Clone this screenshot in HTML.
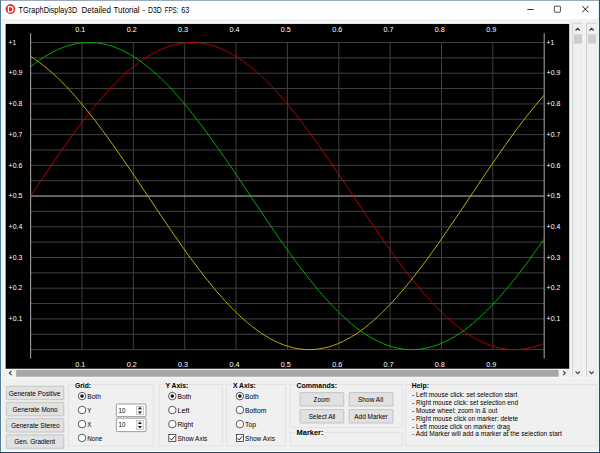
<!DOCTYPE html>
<html lang="en"><head><meta charset="utf-8"><title>TGraphDisplay3D Detailed Tutorial - D3D FPS: 63</title>
<style>
html,body{margin:0;padding:0;background:#f0f0f0;overflow:hidden}
body{width:600px;height:453px;position:relative;font-family:"Liberation Sans", sans-serif}
svg{position:absolute;left:0;top:0;display:block}
text{font-family:"Liberation Sans", sans-serif;white-space:pre}
.t{font-size:8.7px;fill:#000}
.ax{font-size:7.1px;fill:#fff}
.ui{font-size:7px;fill:#000}
.b{font-weight:bold;font-size:7px;fill:#000}
</style></head><body>
<svg width="600" height="453" viewBox="0 0 600 453">
<rect x="0" y="0" width="600" height="453" fill="#f0f0f0"/>
<rect x="0" y="0" width="600" height="19.2" fill="#ffffff"/>
<rect x="0" y="0" width="600" height="0.6" fill="#56718f"/>
<rect x="0" y="0" width="1" height="453" fill="#4f8098"/>
<rect x="1" y="19.2" width="0.4" height="453" fill="#ffffff"/>
<rect x="598" y="19.2" width="1" height="453" fill="#ffffff"/>
<rect x="598.9" y="0" width="1.1" height="453" fill="#2b4a78"/>
<rect x="0.9" y="450.8" width="598" height="1.2" fill="#ffffff"/>
<rect x="0" y="452" width="600" height="1" fill="#23426b"/>
<circle cx="10.45" cy="9.1" r="4.85" fill="#e8222a"/>
<path d="M8.4 6.6h2a2.6 2.6 0 0 1 0 5.2h-2z" fill="none" stroke="#fff" stroke-width="1.25"/>
<text class="t" y="12.5"><tspan x="18.6" textLength="58.7" lengthAdjust="spacingAndGlyphs">TGraphDisplay3D</tspan> <tspan x="81.6" textLength="29.3" lengthAdjust="spacingAndGlyphs">Detailed</tspan> <tspan x="113.6" textLength="26.0" lengthAdjust="spacingAndGlyphs">Tutorial</tspan> <tspan x="142.4" textLength="2.7" lengthAdjust="spacingAndGlyphs">-</tspan> <tspan x="148" textLength="13.8" lengthAdjust="spacingAndGlyphs">D3D</tspan> <tspan x="164.7" textLength="13.7" lengthAdjust="spacingAndGlyphs">FPS:</tspan> <tspan x="181.2" textLength="8.1" lengthAdjust="spacingAndGlyphs">63</tspan></text>
<path d="M527.3 9.5h6.5" stroke="#222" stroke-width="0.9" fill="none"/>
<rect x="554.4" y="6.2" width="6" height="6" rx="0.6" fill="none" stroke="#333" stroke-width="0.9"/>
<path d="M582.3 6.1l6.2 6.2M588.5 6.1l-6.2 6.2" stroke="#1a1a1a" stroke-width="1" fill="none"/>
<rect x="3.8" y="22.5" width="565.4000000000001" height="346.4" fill="#ffffff"/>
<rect x="5.6" y="23.9" width="563.6" height="345.0" fill="#000"/>
<rect x="30.6" y="349.10" width="513.6" height="1" fill="#404040"/>
<rect x="30.6" y="333.75" width="513.6" height="1" fill="#404040"/>
<rect x="30.6" y="318.39" width="513.6" height="1" fill="#404040"/>
<rect x="30.6" y="303.04" width="513.6" height="1" fill="#404040"/>
<rect x="30.6" y="287.68" width="513.6" height="1" fill="#404040"/>
<rect x="30.6" y="272.33" width="513.6" height="1" fill="#404040"/>
<rect x="30.6" y="256.97" width="513.6" height="1" fill="#404040"/>
<rect x="30.6" y="241.62" width="513.6" height="1" fill="#404040"/>
<rect x="30.6" y="226.26" width="513.6" height="1" fill="#404040"/>
<rect x="30.6" y="210.91" width="513.6" height="1" fill="#404040"/>
<rect x="30.6" y="180.19" width="513.6" height="1" fill="#404040"/>
<rect x="30.6" y="164.84" width="513.6" height="1" fill="#404040"/>
<rect x="30.6" y="149.49" width="513.6" height="1" fill="#404040"/>
<rect x="30.6" y="134.13" width="513.6" height="1" fill="#404040"/>
<rect x="30.6" y="118.78" width="513.6" height="1" fill="#404040"/>
<rect x="30.6" y="103.42" width="513.6" height="1" fill="#404040"/>
<rect x="30.6" y="88.06" width="513.6" height="1" fill="#404040"/>
<rect x="30.6" y="72.71" width="513.6" height="1" fill="#404040"/>
<rect x="30.6" y="57.36" width="513.6" height="1" fill="#404040"/>
<rect x="30.6" y="42.00" width="513.6" height="1" fill="#404040"/>
<rect x="81.46" y="42.5" width="1" height="307.1" fill="#404040"/>
<rect x="132.82" y="42.5" width="1" height="307.1" fill="#404040"/>
<rect x="184.18" y="42.5" width="1" height="307.1" fill="#404040"/>
<rect x="235.54" y="42.5" width="1" height="307.1" fill="#404040"/>
<rect x="286.90" y="42.5" width="1" height="307.1" fill="#404040"/>
<rect x="338.26" y="42.5" width="1" height="307.1" fill="#404040"/>
<rect x="389.62" y="42.5" width="1" height="307.1" fill="#404040"/>
<rect x="440.98" y="42.5" width="1" height="307.1" fill="#404040"/>
<rect x="492.34" y="42.5" width="1" height="307.1" fill="#404040"/>
<rect x="30.6" y="195.50" width="513.6" height="1.1" fill="#b0b0b0"/>
<rect x="30.05" y="33.2" width="1.1" height="325.3" fill="#9c9c9c"/>
<rect x="543.6500000000001" y="33.2" width="1.1" height="325.3" fill="#9c9c9c"/>
<polyline points="30.60,196.05 31.88,194.13 33.17,192.21 34.45,190.29 35.74,188.38 37.02,186.46 38.30,184.54 39.59,182.63 40.87,180.72 42.16,178.81 43.44,176.91 44.72,175.00 46.01,173.10 47.29,171.21 48.58,169.32 49.86,167.43 51.14,165.54 52.43,163.67 53.71,161.79 55.00,159.92 56.28,158.06 57.56,156.20 58.85,154.35 60.13,152.51 61.42,150.67 62.70,148.84 63.98,147.02 65.27,145.21 66.55,143.40 67.84,141.60 69.12,139.81 70.40,138.03 71.69,136.25 72.97,134.49 74.26,132.74 75.54,130.99 76.82,129.26 78.11,127.54 79.39,125.83 80.68,124.12 81.96,122.43 83.24,120.76 84.53,119.09 85.81,117.43 87.10,115.79 88.38,114.16 89.66,112.54 90.95,110.94 92.23,109.35 93.52,107.77 94.80,106.21 96.08,104.66 97.37,103.12 98.65,101.60 99.94,100.10 101.22,98.61 102.50,97.13 103.79,95.67 105.07,94.23 106.36,92.80 107.64,91.38 108.92,89.99 110.21,88.61 111.49,87.25 112.78,85.90 114.06,84.57 115.34,83.26 116.63,81.97 117.91,80.69 119.20,79.43 120.48,78.19 121.76,76.97 123.05,75.77 124.33,74.59 125.62,73.42 126.90,72.28 128.18,71.15 129.47,70.04 130.75,68.96 132.04,67.89 133.32,66.84 134.60,65.82 135.89,64.81 137.17,63.82 138.46,62.86 139.74,61.91 141.02,60.99 142.31,60.09 143.59,59.21 144.88,58.35 146.16,57.51 147.44,56.69 148.73,55.90 150.01,55.12 151.30,54.37 152.58,53.64 153.86,52.94 155.15,52.25 156.43,51.59 157.72,50.95 159.00,50.33 160.28,49.74 161.57,49.17 162.85,48.62 164.14,48.10 165.42,47.59 166.70,47.12 167.99,46.66 169.27,46.23 170.56,45.82 171.84,45.43 173.12,45.07 174.41,44.73 175.69,44.42 176.98,44.13 178.26,43.86 179.54,43.62 180.83,43.40 182.11,43.20 183.40,43.03 184.68,42.88 185.96,42.76 187.25,42.66 188.53,42.59 189.82,42.53 191.10,42.51 192.38,42.50 193.67,42.52 194.95,42.57 196.24,42.63 197.52,42.73 198.80,42.84 200.09,42.98 201.37,43.15 202.66,43.33 203.94,43.54 205.22,43.78 206.51,44.04 207.79,44.32 209.08,44.63 210.36,44.96 211.64,45.31 212.93,45.69 214.21,46.09 215.50,46.52 216.78,46.96 218.06,47.43 219.35,47.93 220.63,48.45 221.92,48.99 223.20,49.55 224.48,50.14 225.77,50.75 227.05,51.38 228.34,52.03 229.62,52.71 230.90,53.41 232.19,54.13 233.47,54.87 234.76,55.64 236.04,56.43 237.32,57.24 238.61,58.07 239.89,58.92 241.18,59.80 242.46,60.69 243.74,61.61 245.03,62.55 246.31,63.50 247.60,64.48 248.88,65.48 250.16,66.50 251.45,67.54 252.73,68.60 254.02,69.69 255.30,70.79 256.58,71.91 257.87,73.04 259.15,74.20 260.44,75.38 261.72,76.58 263.00,77.79 264.29,79.03 265.57,80.28 266.86,81.55 268.14,82.83 269.42,84.14 270.71,85.46 271.99,86.80 273.28,88.16 274.56,89.53 275.84,90.93 277.13,92.33 278.41,93.76 279.70,95.20 280.98,96.65 282.26,98.12 283.55,99.61 284.83,101.11 286.12,102.62 287.40,104.15 288.68,105.70 289.97,107.26 291.25,108.83 292.54,110.42 293.82,112.02 295.10,113.63 296.39,115.26 297.67,116.89 298.96,118.55 300.24,120.21 301.52,121.88 302.81,123.57 304.09,125.27 305.38,126.98 306.66,128.70 307.94,130.43 309.23,132.17 310.51,133.92 311.80,135.68 313.08,137.45 314.36,139.22 315.65,141.01 316.93,142.81 318.22,144.61 319.50,146.43 320.78,148.25 322.07,150.07 323.35,151.91 324.64,153.75 325.92,155.60 327.20,157.45 328.49,159.31 329.77,161.18 331.06,163.05 332.34,164.93 333.62,166.81 334.91,168.70 336.19,170.59 337.48,172.48 338.76,174.38 340.04,176.28 341.33,178.19 342.61,180.10 343.90,182.01 345.18,183.92 346.46,185.83 347.75,187.75 349.03,189.67 350.32,191.58 351.60,193.50 352.88,195.42 354.17,197.34 355.45,199.26 356.74,201.18 358.02,203.10 359.30,205.01 360.59,206.93 361.87,208.84 363.16,210.75 364.44,212.66 365.72,214.57 367.01,216.47 368.29,218.37 369.58,220.27 370.86,222.17 372.14,224.05 373.43,225.94 374.71,227.82 376.00,229.70 377.28,231.57 378.56,233.43 379.85,235.29 381.13,237.14 382.42,238.99 383.70,240.83 384.98,242.66 386.27,244.48 387.55,246.30 388.84,248.11 390.12,249.91 391.40,251.71 392.69,253.49 393.97,255.27 395.26,257.03 396.54,258.79 397.82,260.54 399.11,262.27 400.39,264.00 401.68,265.71 402.96,267.42 404.24,269.11 405.53,270.80 406.81,272.47 408.10,274.13 409.38,275.77 410.66,277.41 411.95,279.03 413.23,280.64 414.52,282.23 415.80,283.81 417.08,285.38 418.37,286.94 419.65,288.48 420.94,290.00 422.22,291.51 423.50,293.01 424.79,294.49 426.07,295.95 427.36,297.40 428.64,298.84 429.92,300.25 431.21,301.66 432.49,303.04 433.78,304.41 435.06,305.76 436.34,307.10 437.63,308.41 438.91,309.71 440.20,310.99 441.48,312.26 442.76,313.50 444.05,314.73 445.33,315.94 446.62,317.13 447.90,318.30 449.18,319.45 450.47,320.58 451.75,321.70 453.04,322.79 454.32,323.86 455.60,324.92 456.89,325.95 458.17,326.96 459.46,327.96 460.74,328.93 462.02,329.88 463.31,330.81 464.59,331.72 465.88,332.61 467.16,333.48 468.44,334.32 469.73,335.14 471.01,335.95 472.30,336.73 473.58,337.49 474.86,338.22 476.15,338.94 477.43,339.63 478.72,340.30 480.00,340.94 481.28,341.57 482.57,342.17 483.85,342.75 485.14,343.30 486.42,343.84 487.70,344.34 488.99,344.83 490.27,345.29 491.56,345.73 492.84,346.15 494.12,346.54 495.41,346.91 496.69,347.26 497.98,347.58 499.26,347.88 500.54,348.15 501.83,348.40 503.11,348.63 504.40,348.83 505.68,349.01 506.96,349.17 508.25,349.30 509.53,349.41 510.82,349.49 512.10,349.55 513.38,349.59 514.67,349.60 515.95,349.59 517.24,349.55 518.52,349.49 519.80,349.41 521.09,349.30 522.37,349.17 523.66,349.01 524.94,348.83 526.22,348.63 527.51,348.40 528.79,348.15 530.08,347.87 531.36,347.57 532.64,347.25 533.93,346.91 535.21,346.54 536.50,346.14 537.78,345.73 539.06,345.29 540.35,344.82 541.63,344.34 542.92,343.83 544.20,343.29" fill="none" stroke="#c40000" stroke-width="1"/>
<polyline points="30.60,66.84 31.88,65.82 33.17,64.81 34.45,63.82 35.74,62.86 37.02,61.91 38.30,60.99 39.59,60.09 40.87,59.21 42.16,58.35 43.44,57.51 44.72,56.69 46.01,55.90 47.29,55.12 48.58,54.37 49.86,53.64 51.14,52.94 52.43,52.25 53.71,51.59 55.00,50.95 56.28,50.33 57.56,49.74 58.85,49.17 60.13,48.62 61.42,48.10 62.70,47.59 63.98,47.12 65.27,46.66 66.55,46.23 67.84,45.82 69.12,45.43 70.40,45.07 71.69,44.73 72.97,44.42 74.26,44.13 75.54,43.86 76.82,43.62 78.11,43.40 79.39,43.20 80.68,43.03 81.96,42.88 83.24,42.76 84.53,42.66 85.81,42.59 87.10,42.53 88.38,42.51 89.66,42.50 90.95,42.52 92.23,42.57 93.52,42.63 94.80,42.73 96.08,42.84 97.37,42.98 98.65,43.15 99.94,43.33 101.22,43.54 102.50,43.78 103.79,44.04 105.07,44.32 106.36,44.63 107.64,44.96 108.92,45.31 110.21,45.69 111.49,46.09 112.78,46.52 114.06,46.96 115.34,47.43 116.63,47.93 117.91,48.45 119.20,48.99 120.48,49.55 121.76,50.14 123.05,50.75 124.33,51.38 125.62,52.03 126.90,52.71 128.18,53.41 129.47,54.13 130.75,54.87 132.04,55.64 133.32,56.43 134.60,57.24 135.89,58.07 137.17,58.92 138.46,59.80 139.74,60.69 141.02,61.61 142.31,62.55 143.59,63.50 144.88,64.48 146.16,65.48 147.44,66.50 148.73,67.54 150.01,68.60 151.30,69.69 152.58,70.79 153.86,71.91 155.15,73.04 156.43,74.20 157.72,75.38 159.00,76.58 160.28,77.79 161.57,79.03 162.85,80.28 164.14,81.55 165.42,82.83 166.70,84.14 167.99,85.46 169.27,86.80 170.56,88.16 171.84,89.53 173.12,90.93 174.41,92.33 175.69,93.76 176.98,95.20 178.26,96.65 179.54,98.12 180.83,99.61 182.11,101.11 183.40,102.62 184.68,104.15 185.96,105.70 187.25,107.26 188.53,108.83 189.82,110.42 191.10,112.02 192.38,113.63 193.67,115.26 194.95,116.89 196.24,118.55 197.52,120.21 198.80,121.88 200.09,123.57 201.37,125.27 202.66,126.98 203.94,128.70 205.22,130.43 206.51,132.17 207.79,133.92 209.08,135.68 210.36,137.45 211.64,139.22 212.93,141.01 214.21,142.81 215.50,144.61 216.78,146.43 218.06,148.25 219.35,150.07 220.63,151.91 221.92,153.75 223.20,155.60 224.48,157.45 225.77,159.31 227.05,161.18 228.34,163.05 229.62,164.93 230.90,166.81 232.19,168.70 233.47,170.59 234.76,172.48 236.04,174.38 237.32,176.28 238.61,178.19 239.89,180.10 241.18,182.01 242.46,183.92 243.74,185.83 245.03,187.75 246.31,189.67 247.60,191.58 248.88,193.50 250.16,195.42 251.45,197.34 252.73,199.26 254.02,201.18 255.30,203.10 256.58,205.01 257.87,206.93 259.15,208.84 260.44,210.75 261.72,212.66 263.00,214.57 264.29,216.47 265.57,218.37 266.86,220.27 268.14,222.17 269.42,224.05 270.71,225.94 271.99,227.82 273.28,229.70 274.56,231.57 275.84,233.43 277.13,235.29 278.41,237.14 279.70,238.99 280.98,240.83 282.26,242.66 283.55,244.48 284.83,246.30 286.12,248.11 287.40,249.91 288.68,251.71 289.97,253.49 291.25,255.27 292.54,257.03 293.82,258.79 295.10,260.54 296.39,262.27 297.67,264.00 298.96,265.71 300.24,267.42 301.52,269.11 302.81,270.80 304.09,272.47 305.38,274.13 306.66,275.77 307.94,277.41 309.23,279.03 310.51,280.64 311.80,282.23 313.08,283.81 314.36,285.38 315.65,286.94 316.93,288.48 318.22,290.00 319.50,291.51 320.78,293.01 322.07,294.49 323.35,295.95 324.64,297.40 325.92,298.84 327.20,300.25 328.49,301.66 329.77,303.04 331.06,304.41 332.34,305.76 333.62,307.10 334.91,308.41 336.19,309.71 337.48,310.99 338.76,312.26 340.04,313.50 341.33,314.73 342.61,315.94 343.90,317.13 345.18,318.30 346.46,319.45 347.75,320.58 349.03,321.70 350.32,322.79 351.60,323.86 352.88,324.92 354.17,325.95 355.45,326.96 356.74,327.96 358.02,328.93 359.30,329.88 360.59,330.81 361.87,331.72 363.16,332.61 364.44,333.48 365.72,334.32 367.01,335.14 368.29,335.95 369.58,336.73 370.86,337.49 372.14,338.22 373.43,338.94 374.71,339.63 376.00,340.30 377.28,340.94 378.56,341.57 379.85,342.17 381.13,342.75 382.42,343.30 383.70,343.84 384.98,344.34 386.27,344.83 387.55,345.29 388.84,345.73 390.12,346.15 391.40,346.54 392.69,346.91 393.97,347.26 395.26,347.58 396.54,347.88 397.82,348.15 399.11,348.40 400.39,348.63 401.68,348.83 402.96,349.01 404.24,349.17 405.53,349.30 406.81,349.41 408.10,349.49 409.38,349.55 410.66,349.59 411.95,349.60 413.23,349.59 414.52,349.55 415.80,349.49 417.08,349.41 418.37,349.30 419.65,349.17 420.94,349.01 422.22,348.83 423.50,348.63 424.79,348.40 426.07,348.15 427.36,347.87 428.64,347.57 429.92,347.25 431.21,346.91 432.49,346.54 433.78,346.14 435.06,345.73 436.34,345.29 437.63,344.82 438.91,344.34 440.20,343.83 441.48,343.29 442.76,342.74 444.05,342.16 445.33,341.56 446.62,340.93 447.90,340.28 449.18,339.62 450.47,338.92 451.75,338.21 453.04,337.47 454.32,336.71 455.60,335.93 456.89,335.13 458.17,334.31 459.46,333.46 460.74,332.59 462.02,331.70 463.31,330.79 464.59,329.86 465.88,328.91 467.16,327.94 468.44,326.95 469.73,325.93 471.01,324.90 472.30,323.84 473.58,322.77 474.86,321.68 476.15,320.56 477.43,319.43 478.72,318.28 480.00,317.11 481.28,315.92 482.57,314.71 483.85,313.48 485.14,312.23 486.42,310.97 487.70,309.69 488.99,308.39 490.27,307.07 491.56,305.74 492.84,304.39 494.12,303.02 495.41,301.63 496.69,300.23 497.98,298.81 499.26,297.38 500.54,295.93 501.83,294.46 503.11,292.98 504.40,291.48 505.68,289.97 506.96,288.45 508.25,286.91 509.53,285.35 510.82,283.79 512.10,282.20 513.38,280.61 514.67,279.00 515.95,277.38 517.24,275.74 518.52,274.10 519.80,272.44 521.09,270.77 522.37,269.08 523.66,267.39 524.94,265.68 526.22,263.97 527.51,262.24 528.79,260.50 530.08,258.76 531.36,257.00 532.64,255.23 533.93,253.46 535.21,251.67 536.50,249.88 537.78,248.08 539.06,246.27 540.35,244.45 541.63,242.63 542.92,240.79 544.20,238.95" fill="none" stroke="#00b800" stroke-width="1"/>
<polyline points="30.60,56.43 31.88,57.24 33.17,58.07 34.45,58.92 35.74,59.80 37.02,60.69 38.30,61.61 39.59,62.55 40.87,63.50 42.16,64.48 43.44,65.48 44.72,66.50 46.01,67.54 47.29,68.60 48.58,69.69 49.86,70.79 51.14,71.91 52.43,73.04 53.71,74.20 55.00,75.38 56.28,76.58 57.56,77.79 58.85,79.03 60.13,80.28 61.42,81.55 62.70,82.83 63.98,84.14 65.27,85.46 66.55,86.80 67.84,88.16 69.12,89.53 70.40,90.93 71.69,92.33 72.97,93.76 74.26,95.20 75.54,96.65 76.82,98.12 78.11,99.61 79.39,101.11 80.68,102.62 81.96,104.15 83.24,105.70 84.53,107.26 85.81,108.83 87.10,110.42 88.38,112.02 89.66,113.63 90.95,115.26 92.23,116.89 93.52,118.55 94.80,120.21 96.08,121.88 97.37,123.57 98.65,125.27 99.94,126.98 101.22,128.70 102.50,130.43 103.79,132.17 105.07,133.92 106.36,135.68 107.64,137.45 108.92,139.22 110.21,141.01 111.49,142.81 112.78,144.61 114.06,146.43 115.34,148.25 116.63,150.07 117.91,151.91 119.20,153.75 120.48,155.60 121.76,157.45 123.05,159.31 124.33,161.18 125.62,163.05 126.90,164.93 128.18,166.81 129.47,168.70 130.75,170.59 132.04,172.48 133.32,174.38 134.60,176.28 135.89,178.19 137.17,180.10 138.46,182.01 139.74,183.92 141.02,185.83 142.31,187.75 143.59,189.67 144.88,191.58 146.16,193.50 147.44,195.42 148.73,197.34 150.01,199.26 151.30,201.18 152.58,203.10 153.86,205.01 155.15,206.93 156.43,208.84 157.72,210.75 159.00,212.66 160.28,214.57 161.57,216.47 162.85,218.37 164.14,220.27 165.42,222.17 166.70,224.05 167.99,225.94 169.27,227.82 170.56,229.70 171.84,231.57 173.12,233.43 174.41,235.29 175.69,237.14 176.98,238.99 178.26,240.83 179.54,242.66 180.83,244.48 182.11,246.30 183.40,248.11 184.68,249.91 185.96,251.71 187.25,253.49 188.53,255.27 189.82,257.03 191.10,258.79 192.38,260.54 193.67,262.27 194.95,264.00 196.24,265.71 197.52,267.42 198.80,269.11 200.09,270.80 201.37,272.47 202.66,274.13 203.94,275.77 205.22,277.41 206.51,279.03 207.79,280.64 209.08,282.23 210.36,283.81 211.64,285.38 212.93,286.94 214.21,288.48 215.50,290.00 216.78,291.51 218.06,293.01 219.35,294.49 220.63,295.95 221.92,297.40 223.20,298.84 224.48,300.25 225.77,301.66 227.05,303.04 228.34,304.41 229.62,305.76 230.90,307.10 232.19,308.41 233.47,309.71 234.76,310.99 236.04,312.26 237.32,313.50 238.61,314.73 239.89,315.94 241.18,317.13 242.46,318.30 243.74,319.45 245.03,320.58 246.31,321.70 247.60,322.79 248.88,323.86 250.16,324.92 251.45,325.95 252.73,326.96 254.02,327.96 255.30,328.93 256.58,329.88 257.87,330.81 259.15,331.72 260.44,332.61 261.72,333.48 263.00,334.32 264.29,335.14 265.57,335.95 266.86,336.73 268.14,337.49 269.42,338.22 270.71,338.94 271.99,339.63 273.28,340.30 274.56,340.94 275.84,341.57 277.13,342.17 278.41,342.75 279.70,343.30 280.98,343.84 282.26,344.34 283.55,344.83 284.83,345.29 286.12,345.73 287.40,346.15 288.68,346.54 289.97,346.91 291.25,347.26 292.54,347.58 293.82,347.88 295.10,348.15 296.39,348.40 297.67,348.63 298.96,348.83 300.24,349.01 301.52,349.17 302.81,349.30 304.09,349.41 305.38,349.49 306.66,349.55 307.94,349.59 309.23,349.60 310.51,349.59 311.80,349.55 313.08,349.49 314.36,349.41 315.65,349.30 316.93,349.17 318.22,349.01 319.50,348.83 320.78,348.63 322.07,348.40 323.35,348.15 324.64,347.87 325.92,347.57 327.20,347.25 328.49,346.91 329.77,346.54 331.06,346.14 332.34,345.73 333.62,345.29 334.91,344.82 336.19,344.34 337.48,343.83 338.76,343.29 340.04,342.74 341.33,342.16 342.61,341.56 343.90,340.93 345.18,340.28 346.46,339.62 347.75,338.92 349.03,338.21 350.32,337.47 351.60,336.71 352.88,335.93 354.17,335.13 355.45,334.31 356.74,333.46 358.02,332.59 359.30,331.70 360.59,330.79 361.87,329.86 363.16,328.91 364.44,327.94 365.72,326.95 367.01,325.93 368.29,324.90 369.58,323.84 370.86,322.77 372.14,321.68 373.43,320.56 374.71,319.43 376.00,318.28 377.28,317.11 378.56,315.92 379.85,314.71 381.13,313.48 382.42,312.23 383.70,310.97 384.98,309.69 386.27,308.39 387.55,307.07 388.84,305.74 390.12,304.39 391.40,303.02 392.69,301.63 393.97,300.23 395.26,298.81 396.54,297.38 397.82,295.93 399.11,294.46 400.39,292.98 401.68,291.48 402.96,289.97 404.24,288.45 405.53,286.91 406.81,285.35 408.10,283.79 409.38,282.20 410.66,280.61 411.95,279.00 413.23,277.38 414.52,275.74 415.80,274.10 417.08,272.44 418.37,270.77 419.65,269.08 420.94,267.39 422.22,265.68 423.50,263.97 424.79,262.24 426.07,260.50 427.36,258.76 428.64,257.00 429.92,255.23 431.21,253.46 432.49,251.67 433.78,249.88 435.06,248.08 436.34,246.27 437.63,244.45 438.91,242.63 440.20,240.79 441.48,238.95 442.76,237.11 444.05,235.26 445.33,233.40 446.62,231.53 447.90,229.66 449.18,227.79 450.47,225.91 451.75,224.02 453.04,222.13 454.32,220.24 455.60,218.34 456.89,216.44 458.17,214.54 459.46,212.63 460.74,210.72 462.02,208.81 463.31,206.89 464.59,204.98 465.88,203.06 467.16,201.14 468.44,199.23 469.73,197.31 471.01,195.39 472.30,193.47 473.58,191.55 474.86,189.63 476.15,187.71 477.43,185.80 478.72,183.88 480.00,181.97 481.28,180.06 482.57,178.15 483.85,176.25 485.14,174.35 486.42,172.45 487.70,170.55 488.99,168.66 490.27,166.78 491.56,164.90 492.84,163.02 494.12,161.15 495.41,159.28 496.69,157.42 497.98,155.56 499.26,153.72 500.54,151.88 501.83,150.04 503.11,148.21 504.40,146.39 505.68,144.58 506.96,142.78 508.25,140.98 509.53,139.19 510.82,137.41 512.10,135.65 513.38,133.89 514.67,132.14 515.95,130.39 517.24,128.67 518.52,126.95 519.80,125.24 521.09,123.54 522.37,121.85 523.66,120.18 524.94,118.52 526.22,116.87 527.51,115.23 528.79,113.60 530.08,111.99 531.36,110.39 532.64,108.80 533.93,107.23 535.21,105.67 536.50,104.13 537.78,102.60 539.06,101.08 540.35,99.58 541.63,98.09 542.92,96.62 544.20,95.17" fill="none" stroke="#c4b800" stroke-width="1"/>
<text class="ax" x="75.36" y="31.6" textLength="10" lengthAdjust="spacingAndGlyphs">0.1</text>
<text class="ax" x="75.36" y="366.6" textLength="10" lengthAdjust="spacingAndGlyphs">0.1</text>
<text class="ax" x="126.72" y="31.6" textLength="10" lengthAdjust="spacingAndGlyphs">0.2</text>
<text class="ax" x="126.72" y="366.6" textLength="10" lengthAdjust="spacingAndGlyphs">0.2</text>
<text class="ax" x="178.08" y="31.6" textLength="10" lengthAdjust="spacingAndGlyphs">0.3</text>
<text class="ax" x="178.08" y="366.6" textLength="10" lengthAdjust="spacingAndGlyphs">0.3</text>
<text class="ax" x="229.44" y="31.6" textLength="10" lengthAdjust="spacingAndGlyphs">0.4</text>
<text class="ax" x="229.44" y="366.6" textLength="10" lengthAdjust="spacingAndGlyphs">0.4</text>
<text class="ax" x="280.80" y="31.6" textLength="10" lengthAdjust="spacingAndGlyphs">0.5</text>
<text class="ax" x="280.80" y="366.6" textLength="10" lengthAdjust="spacingAndGlyphs">0.5</text>
<text class="ax" x="332.16" y="31.6" textLength="10" lengthAdjust="spacingAndGlyphs">0.6</text>
<text class="ax" x="332.16" y="366.6" textLength="10" lengthAdjust="spacingAndGlyphs">0.6</text>
<text class="ax" x="383.52" y="31.6" textLength="10" lengthAdjust="spacingAndGlyphs">0.7</text>
<text class="ax" x="383.52" y="366.6" textLength="10" lengthAdjust="spacingAndGlyphs">0.7</text>
<text class="ax" x="434.88" y="31.6" textLength="10" lengthAdjust="spacingAndGlyphs">0.8</text>
<text class="ax" x="434.88" y="366.6" textLength="10" lengthAdjust="spacingAndGlyphs">0.8</text>
<text class="ax" x="486.24" y="31.6" textLength="10" lengthAdjust="spacingAndGlyphs">0.9</text>
<text class="ax" x="486.24" y="366.6" textLength="10" lengthAdjust="spacingAndGlyphs">0.9</text>
<text class="ax" x="8.6" y="321.09" textLength="13.7" lengthAdjust="spacingAndGlyphs">+0.1</text>
<text class="ax" x="546.6" y="321.09" textLength="13.7" lengthAdjust="spacingAndGlyphs">+0.1</text>
<text class="ax" x="8.6" y="290.38" textLength="13.7" lengthAdjust="spacingAndGlyphs">+0.2</text>
<text class="ax" x="546.6" y="290.38" textLength="13.7" lengthAdjust="spacingAndGlyphs">+0.2</text>
<text class="ax" x="8.6" y="259.67" textLength="13.7" lengthAdjust="spacingAndGlyphs">+0.3</text>
<text class="ax" x="546.6" y="259.67" textLength="13.7" lengthAdjust="spacingAndGlyphs">+0.3</text>
<text class="ax" x="8.6" y="228.96" textLength="13.7" lengthAdjust="spacingAndGlyphs">+0.4</text>
<text class="ax" x="546.6" y="228.96" textLength="13.7" lengthAdjust="spacingAndGlyphs">+0.4</text>
<text class="ax" x="8.6" y="198.25" textLength="13.7" lengthAdjust="spacingAndGlyphs">+0.5</text>
<text class="ax" x="546.6" y="198.25" textLength="13.7" lengthAdjust="spacingAndGlyphs">+0.5</text>
<text class="ax" x="8.6" y="167.54" textLength="13.7" lengthAdjust="spacingAndGlyphs">+0.6</text>
<text class="ax" x="546.6" y="167.54" textLength="13.7" lengthAdjust="spacingAndGlyphs">+0.6</text>
<text class="ax" x="8.6" y="136.83" textLength="13.7" lengthAdjust="spacingAndGlyphs">+0.7</text>
<text class="ax" x="546.6" y="136.83" textLength="13.7" lengthAdjust="spacingAndGlyphs">+0.7</text>
<text class="ax" x="8.6" y="106.12" textLength="13.7" lengthAdjust="spacingAndGlyphs">+0.8</text>
<text class="ax" x="546.6" y="106.12" textLength="13.7" lengthAdjust="spacingAndGlyphs">+0.8</text>
<text class="ax" x="8.6" y="75.41" textLength="13.7" lengthAdjust="spacingAndGlyphs">+0.9</text>
<text class="ax" x="546.6" y="75.41" textLength="13.7" lengthAdjust="spacingAndGlyphs">+0.9</text>
<text class="ax" x="8.6" y="44.70" textLength="7.5" lengthAdjust="spacingAndGlyphs">+1</text>
<text class="ax" x="546.6" y="44.70" textLength="7.5" lengthAdjust="spacingAndGlyphs">+1</text>
<rect x="5.5" y="368.9" width="563.7" height="9" fill="#f0f0f0"/>
<rect x="5.5" y="368.9" width="563.7" height="0.7" fill="#ffffff"/>
<rect x="16.2" y="369.8" width="542.4" height="6.9" fill="#a6a6a6"/>
<path d="M11.6 370.9l-2.3 2.1l2.3 2.1" stroke="#444" stroke-width="1.1" fill="none"/>
<path d="M563.1 370.9l2.3 2.1l-2.3 2.1" stroke="#444" stroke-width="1.1" fill="none"/>
<rect x="571.6" y="22.6" width="12" height="354.8" fill="#fafafa"/>
<rect x="572.1999999999999" y="22.8" width="10.6" height="354.3" fill="#cccccc"/>
<rect x="573.1" y="23.6" width="9.7" height="353.5" fill="#f0f0f0"/>
<rect x="573.9" y="34.3" width="8.1" height="9.3" fill="#cdcdcd"/>
<path d="M575.55 30.5l2.15 -2.2l2.15 2.2" stroke="#3c3c3c" stroke-width="1.15" fill="none"/>
<path d="M575.55 371.4l2.15 2.2l2.15 -2.2" stroke="#3c3c3c" stroke-width="1.15" fill="none"/>
<rect x="585.5" y="22.6" width="12" height="354.8" fill="#fafafa"/>
<rect x="586.0999999999999" y="22.8" width="10.6" height="354.3" fill="#cccccc"/>
<rect x="587.0" y="23.6" width="9.7" height="353.5" fill="#f0f0f0"/>
<rect x="587.8" y="34.3" width="8.1" height="9.3" fill="#cdcdcd"/>
<path d="M589.4499999999999 30.5l2.15 -2.2l2.15 2.2" stroke="#3c3c3c" stroke-width="1.15" fill="none"/>
<path d="M589.4499999999999 371.4l2.15 2.2l2.15 -2.2" stroke="#3c3c3c" stroke-width="1.15" fill="none"/>
<rect x="1.5" y="377.4" width="596.5" height="0.9" fill="#fafafa"/>
<rect x="6.4" y="386.2" width="57.4" height="13.5" rx="0.5" fill="#e1e1e1" stroke="#b2b2b2" stroke-width="0.65"/>
<text class="ui" x="8.70" y="395.85" textLength="51.80" lengthAdjust="spacingAndGlyphs">Generate Positive</text>
<rect x="6.4" y="402.4" width="57.4" height="13.5" rx="0.5" fill="#e1e1e1" stroke="#b2b2b2" stroke-width="0.65"/>
<text class="ui" x="12.50" y="412.05" textLength="45.20" lengthAdjust="spacingAndGlyphs">Generate Mono</text>
<rect x="6.4" y="418.59999999999997" width="57.4" height="13.5" rx="0.5" fill="#e1e1e1" stroke="#b2b2b2" stroke-width="0.65"/>
<text class="ui" x="10.90" y="428.25" textLength="48.80" lengthAdjust="spacingAndGlyphs">Generate Stereo</text>
<rect x="6.4" y="434.79999999999995" width="57.4" height="13.5" rx="0.5" fill="#e1e1e1" stroke="#b2b2b2" stroke-width="0.65"/>
<text class="ui" x="14.20" y="444.45" textLength="41.00" lengthAdjust="spacingAndGlyphs">Gen. Gradient</text>
<rect x="68.6" y="384.6" width="84.60" height="61.30" fill="none" stroke="#dcdcdc" stroke-width="0.7"/>
<rect x="73.6" y="382.6" width="18.7" height="4" fill="#f0f0f0"/>
<text class="b" x="74.90" y="387.90" textLength="16.20" lengthAdjust="spacingAndGlyphs">Grid:</text>
<circle cx="82" cy="396.1" r="3.75" fill="#fff" stroke="#333" stroke-width="0.8"/>
<circle cx="82" cy="396.1" r="1.8" fill="#1a1a1a"/>
<text class="ui" x="87.20" y="398.70" textLength="13.70" lengthAdjust="spacingAndGlyphs">Both</text>
<circle cx="82" cy="410.0" r="3.75" fill="#fff" stroke="#333" stroke-width="0.8"/>
<text class="ui" x="87.20" y="412.60" textLength="4.10" lengthAdjust="spacingAndGlyphs">Y</text>
<circle cx="82" cy="424.1" r="3.75" fill="#fff" stroke="#333" stroke-width="0.8"/>
<text class="ui" x="87.20" y="426.70" textLength="4.10" lengthAdjust="spacingAndGlyphs">X</text>
<circle cx="82" cy="437.9" r="3.75" fill="#fff" stroke="#333" stroke-width="0.8"/>
<text class="ui" x="87.20" y="440.50" textLength="15.10" lengthAdjust="spacingAndGlyphs">None</text>
<rect x="116.3" y="404" width="29.7" height="12.6" rx="0.8" fill="#fff" stroke="#8c8c8c" stroke-width="0.85"/>
<text class="ui" x="118.50" y="412.60" textLength="6.90" lengthAdjust="spacingAndGlyphs">10</text>
<rect x="136.3" y="406.3" width="7.2" height="8.3" fill="#f4f4f4" stroke="#b0b0b0" stroke-width="0.6"/>
<path d="M137.9 409.3l2 -2.5l2 2.5z" fill="#1a1a1a"/>
<path d="M137.9 411.50000000000006l2 2.5l2 -2.5z" fill="#1a1a1a"/>
<rect x="116.3" y="418.2" width="29.7" height="13.4" rx="0.8" fill="#fff" stroke="#8c8c8c" stroke-width="0.85"/>
<text class="ui" x="118.50" y="427.20" textLength="6.90" lengthAdjust="spacingAndGlyphs">10</text>
<rect x="136.3" y="420.5" width="7.2" height="9.100000000000001" fill="#f4f4f4" stroke="#b0b0b0" stroke-width="0.6"/>
<path d="M137.9 423.9l2 -2.5l2 2.5z" fill="#1a1a1a"/>
<path d="M137.9 426.1l2 2.5l2 -2.5z" fill="#1a1a1a"/>
<rect x="159.1" y="384.6" width="63.40" height="61.30" fill="none" stroke="#dcdcdc" stroke-width="0.7"/>
<rect x="164.1" y="382.6" width="25.4" height="4" fill="#f0f0f0"/>
<text class="b" x="165.40" y="387.90" textLength="22.90" lengthAdjust="spacingAndGlyphs">Y Axis:</text>
<circle cx="172.3" cy="396.1" r="3.75" fill="#fff" stroke="#333" stroke-width="0.8"/>
<circle cx="172.3" cy="396.1" r="1.8" fill="#1a1a1a"/>
<text class="ui" x="177.50" y="398.70" textLength="13.70" lengthAdjust="spacingAndGlyphs">Both</text>
<circle cx="172.3" cy="410.0" r="3.75" fill="#fff" stroke="#333" stroke-width="0.8"/>
<text class="ui" x="177.50" y="412.60" textLength="11.90" lengthAdjust="spacingAndGlyphs">Left</text>
<circle cx="172.3" cy="424.1" r="3.75" fill="#fff" stroke="#333" stroke-width="0.8"/>
<text class="ui" x="177.50" y="426.70" textLength="15.70" lengthAdjust="spacingAndGlyphs">Right</text>
<rect x="168.8" y="434.5" width="7" height="7" fill="#fff" stroke="#333" stroke-width="0.8"/>
<path d="M169.9 438.2l1.7 1.9l3.1 -4" stroke="#222" stroke-width="0.9" fill="none"/>
<text class="ui" x="177.50" y="440.60" textLength="29.80" lengthAdjust="spacingAndGlyphs">Show Axis</text>
<rect x="226.6" y="384.6" width="59.10" height="61.30" fill="none" stroke="#dcdcdc" stroke-width="0.7"/>
<rect x="231.6" y="382.6" width="25.4" height="4" fill="#f0f0f0"/>
<text class="b" x="232.90" y="387.90" textLength="22.90" lengthAdjust="spacingAndGlyphs">X Axis:</text>
<circle cx="239.9" cy="396.1" r="3.75" fill="#fff" stroke="#333" stroke-width="0.8"/>
<circle cx="239.9" cy="396.1" r="1.8" fill="#1a1a1a"/>
<text class="ui" x="245.10" y="398.70" textLength="13.70" lengthAdjust="spacingAndGlyphs">Both</text>
<circle cx="239.9" cy="410.0" r="3.75" fill="#fff" stroke="#333" stroke-width="0.8"/>
<text class="ui" x="245.10" y="412.60" textLength="21.10" lengthAdjust="spacingAndGlyphs">Bottom</text>
<circle cx="239.9" cy="424.1" r="3.75" fill="#fff" stroke="#333" stroke-width="0.8"/>
<text class="ui" x="245.10" y="426.70" textLength="11.00" lengthAdjust="spacingAndGlyphs">Top</text>
<rect x="236.4" y="434.5" width="7" height="7" fill="#fff" stroke="#333" stroke-width="0.8"/>
<path d="M237.5 438.2l1.7 1.9l3.1 -4" stroke="#222" stroke-width="0.9" fill="none"/>
<text class="ui" x="245.10" y="440.60" textLength="29.80" lengthAdjust="spacingAndGlyphs">Show Axis</text>
<rect x="290.2" y="384.6" width="111.90" height="42.70" fill="none" stroke="#dcdcdc" stroke-width="0.7"/>
<rect x="295.2" y="382.6" width="43" height="4" fill="#f0f0f0"/>
<text class="b" x="296.50" y="387.90" textLength="40.50" lengthAdjust="spacingAndGlyphs">Commands:</text>
<rect x="300" y="392.6" width="43.8" height="13.4" rx="0.5" fill="#e1e1e1" stroke="#b2b2b2" stroke-width="0.65"/>
<text class="ui" x="313.60" y="402.20" textLength="16.20" lengthAdjust="spacingAndGlyphs">Zoom</text>
<rect x="300" y="409.6" width="43.8" height="13.4" rx="0.5" fill="#e1e1e1" stroke="#b2b2b2" stroke-width="0.65"/>
<text class="ui" x="308.80" y="419.20" textLength="26.50" lengthAdjust="spacingAndGlyphs">Select All</text>
<rect x="349.2" y="392.6" width="43.8" height="13.4" rx="0.5" fill="#e1e1e1" stroke="#b2b2b2" stroke-width="0.65"/>
<text class="ui" x="358.00" y="402.20" textLength="25.10" lengthAdjust="spacingAndGlyphs">Show All</text>
<rect x="349.2" y="409.6" width="43.8" height="13.4" rx="0.5" fill="#e1e1e1" stroke="#b2b2b2" stroke-width="0.65"/>
<text class="ui" x="354.20" y="419.20" textLength="33.60" lengthAdjust="spacingAndGlyphs">Add Marker</text>
<rect x="290.2" y="432.4" width="111.90" height="13.50" fill="none" stroke="#dcdcdc" stroke-width="0.7"/>
<rect x="295.2" y="430.4" width="29.5" height="4" fill="#f0f0f0"/>
<text class="b" x="296.50" y="435.00" textLength="27.00" lengthAdjust="spacingAndGlyphs">Marker:</text>
<rect x="405.5" y="384.6" width="190.70" height="61.30" fill="none" stroke="#dcdcdc" stroke-width="0.7"/>
<rect x="410.5" y="382.6" width="19.7" height="4" fill="#f0f0f0"/>
<text class="b" x="411.80" y="387.90" textLength="17.20" lengthAdjust="spacingAndGlyphs">Help:</text>
<text class="ui" x="412.10" y="397.30" textLength="105.10" lengthAdjust="spacingAndGlyphs">- Left mouse click: set selection start</text>
<text class="ui" x="412.10" y="405.13" textLength="105.90" lengthAdjust="spacingAndGlyphs">- Right mouse click: set selection end</text>
<text class="ui" x="412.10" y="412.96" textLength="85.10" lengthAdjust="spacingAndGlyphs">- Mouse wheel: zoom in &amp; out</text>
<text class="ui" x="412.10" y="420.79" textLength="105.90" lengthAdjust="spacingAndGlyphs">- Right mouse click on marker: delete</text>
<text class="ui" x="412.10" y="428.62" textLength="97.80" lengthAdjust="spacingAndGlyphs">- Left mouse click on marker: drag</text>
<text class="ui" x="412.10" y="436.45" textLength="149.80" lengthAdjust="spacingAndGlyphs">- Add Marker will add a marker at the selection start</text>
</svg></body></html>
